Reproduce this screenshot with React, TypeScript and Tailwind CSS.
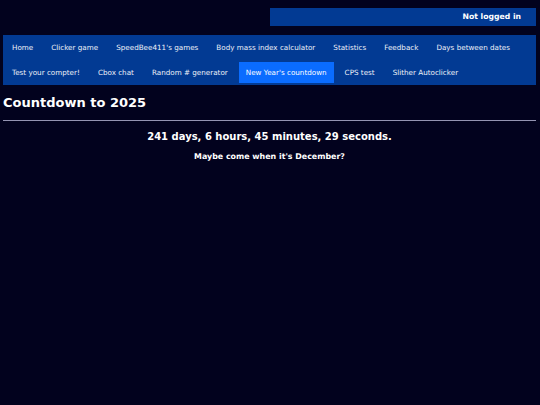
const navItems = [
  'Home',
  'Clicker game',
  "SpeedBee411's games",
  'Body mass index calculator',
  'Statistics',
  'Feedback',
  'Days between dates',
  'Test your compter!',
  'Cbox chat',
  'Random # generator',
  "New Year's countdown",
  'CPS test',
  'Slither Autoclicker',
];

const ACTIVE = "New Year's countdown";

export default function App() {
  return (
    <div
      className="min-h-[405px] w-[540px] bg-[#02021e] pl-[3px] pr-[4px] pt-[8px] text-white"
      style={{ fontFamily: '"DejaVu Sans", Verdana, sans-serif' }}
    >
      <div className="ml-auto flex h-[18px] w-[266px] items-center justify-end bg-[#023a93] pr-[15px] text-[7.7px] font-bold leading-none">
        Not logged in
      </div>

      <nav className="mt-[9px] flex flex-wrap bg-[#023a93]">
        {navItems.map((item) => (
          <a
            key={item}
            href="#"
            className={
              item === ACTIVE
                ? 'm-[2px] flex h-[21px] items-center bg-[#0a6cff] px-[7px] text-[7.2px] leading-none text-white'
                : 'm-[2px] flex h-[21px] items-center px-[7px] text-[7.2px] leading-none text-[#eef1f8]'
            }
          >
            {item}
          </a>
        ))}
      </nav>

      <h1 className="mt-[11px] text-[13px] font-bold leading-none">Countdown to 2025</h1>
      <hr className="mt-[11px] h-px border-0 bg-[#9494b2]" />

      <div className="mt-[11px] text-center text-[10px] font-bold leading-none">
        241 days, 6 hours, 45 minutes, 29 seconds.
      </div>
      <div className="mt-[11px] text-center text-[7.9px] font-bold leading-none">
        Maybe come when it's December?
      </div>
    </div>
  );
}
